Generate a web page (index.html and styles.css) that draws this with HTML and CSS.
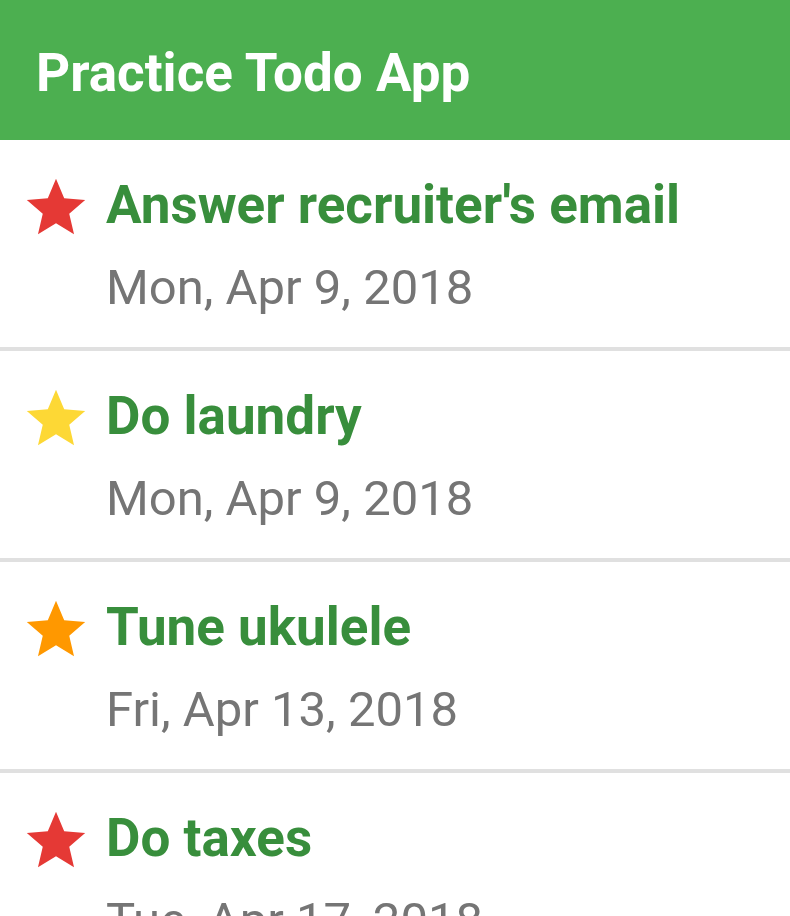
FILE: index.html
```html
<!DOCTYPE html>
<html>
<head>
<meta charset="utf-8">
<link rel="stylesheet" href="styles.css">
</head>
<body>
<header class="appbar"><h1 class="appbar-title">Practice Todo App</h1></header>
<ul class="todo-list">
  <li class="todo">
    <svg class="star star-red" viewBox="0 0 24 24"><path d="M12 17.27L18.18 21l-1.64-7.03L22 9.24l-7.19-.61L12 2 9.19 8.63 2 9.24l5.46 4.73L5.82 21z"/></svg>
    <div class="todo-text"><div class="todo-title">Answer recruiter's email</div><div class="todo-date">Mon, Apr 9, 2018</div></div>
  </li>
  <li class="todo">
    <svg class="star star-yellow" viewBox="0 0 24 24"><path d="M12 17.27L18.18 21l-1.64-7.03L22 9.24l-7.19-.61L12 2 9.19 8.63 2 9.24l5.46 4.73L5.82 21z"/></svg>
    <div class="todo-text"><div class="todo-title">Do laundry</div><div class="todo-date">Mon, Apr 9, 2018</div></div>
  </li>
  <li class="todo">
    <svg class="star star-orange" viewBox="0 0 24 24"><path d="M12 17.27L18.18 21l-1.64-7.03L22 9.24l-7.19-.61L12 2 9.19 8.63 2 9.24l5.46 4.73L5.82 21z"/></svg>
    <div class="todo-text"><div class="todo-title">Tune ukulele</div><div class="todo-date">Fri, Apr 13, 2018</div></div>
  </li>
  <li class="todo">
    <svg class="star star-red" viewBox="0 0 24 24"><path d="M12 17.27L18.18 21l-1.64-7.03L22 9.24l-7.19-.61L12 2 9.19 8.63 2 9.24l5.46 4.73L5.82 21z"/></svg>
    <div class="todo-text"><div class="todo-title">Do taxes</div><div class="todo-date">Tue, Apr 17, 2018</div></div>
  </li>
</ul>
</body>
</html>
```

FILE: styles.css
```css
html, body {
  margin: 0;
  padding: 0;
  background: #ffffff;
  font-family: Roboto, "Liberation Sans", sans-serif;
  overflow: hidden;
}
.appbar {
  height: 140px;
  background: #4caf50;
  display: flex;
  align-items: flex-start;
  padding: 43px 36px 0;
  box-sizing: border-box;
}
.appbar-title {
  margin: 0;
  color: #ffffff;
  font-size: 53px;
  font-weight: 700;
  line-height: 60px;
}
.todo-list {
  list-style: none;
  margin: 0;
  padding: 0;
}
.todo {
  display: flex;
  align-items: flex-start;
  height: 211px;
  box-sizing: border-box;
  padding: 35px 0 0 21px;
  border-bottom: 4px solid #e0e0e0;
}
.star {
  width: 70px;
  height: 70px;
  flex: none;
  margin-top: -2px;
}
.star-red { fill: #e53935; }
.star-yellow { fill: #fdd835; }
.star-orange { fill: #ff9800; }
.todo-text {
  margin-left: 15px;
}
.todo-title {
  color: #388e3c;
  font-size: 53px;
  font-weight: 700;
  line-height: 60px;
  white-space: nowrap;
}
.todo-date {
  margin-top: 23px;
  color: #757575;
  font-size: 49px;
  line-height: 60px;
  white-space: nowrap;
}
```
